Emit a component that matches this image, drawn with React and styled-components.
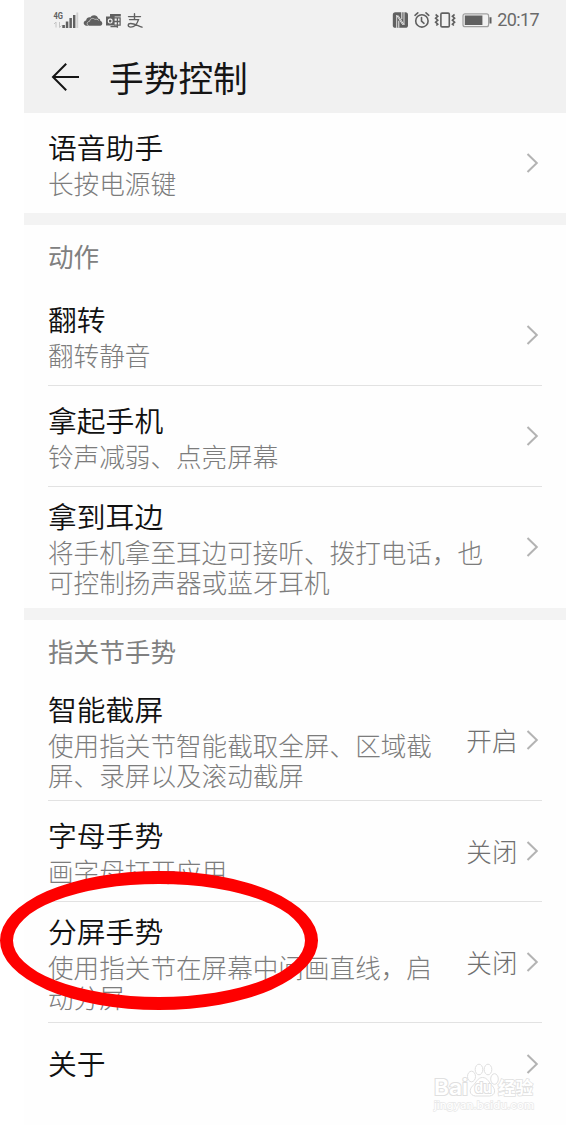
import React from 'react'
import styled, { createGlobalStyle } from 'styled-components';


const GlobalStyle = createGlobalStyle`
    * {
        box-sizing: border-box;
    }
    body {
        margin: 0;
        background: #fff;
        font-family: "Noto Sans CJK SC", "Noto Sans", sans-serif;
        font-weight: 350;
    }
`
const Page = styled.div`
    position: relative;
    width: 566px;
    height: 1125px;
    padding-left: 24px;
    overflow: hidden;
    background: #fff;
`
const Screen = styled.main`
    height: 1125px;
    background: #fefefe;
`
const Header = styled.header`
    height: 113px;
    background: #f1f1f1;
`
const StatusBar = styled.div`
    display: flex;
    justify-content: space-between;
    align-items: center;
    height: 40px;
    padding: 0 27px 0 29px;
    color: #606060;
`
const StatusGroup = styled.div`
    display: flex;
    align-items: center;
    svg {
        display: block;
    }
`
const Clock = styled.span`
    margin-left: 5px;
    font-family: Roboto, sans-serif;
    font-size: 18px;
    font-weight: 400;
    line-height: 20px;
    letter-spacing: -0.6px;
    color: #6a6a6a;
`
const TitleBar = styled.div`
    display: flex;
    align-items: center;
    height: 73px;
    padding: 0 0 0 27px;
    svg {
        display: block;
        margin-right: 29px;
    }
`
const PageTitle = styled.h1`
    margin: 0;
    font-size: 34.7px;
    font-weight: 400;
    line-height: 50px;
    color: #151515;
`
const Section = styled.section`
    border-top: ${props => (props.$first ? '0' : '12px solid #f3f3f3')};
`
const SectionTitle = styled.h2`
    height: 60px;
    margin: 0;
    padding: 10px 24px 0;
    font-size: 25.6px;
    font-weight: 400;
    line-height: 42px;
    color: #808080;
`
const Row = styled.div`
    display: flex;
    align-items: center;
    height: ${props => props.$height}px;
    margin: 0 24px;
    border-bottom: 1px solid ${props => (props.$last ? 'transparent' : '#e2e2e2')};
`
const RowText = styled.div`
    flex: 1;
    min-width: 0;
    padding-bottom: 2px;
`
const RowTitle = styled.div`
    font-size: 28.8px;
    line-height: 42px;
    color: #111;
`
const RowHint = styled.div`
    font-size: 25.6px;
    font-weight: 300;
    line-height: 30px;
    color: #7c7c7c;
`
const RowValue = styled.span`
    margin-left: 24px;
    margin-right: -15.5px;
    font-size: 25.6px;
    font-weight: 300;
    line-height: 42px;
    color: #707070;
`
const Arrow = styled.svg`
    flex: none;
    display: block;
    width: 13px;
    height: 22px;
    margin-left: 24px;
    margin-right: 3px;
`
// red ring drawn over the list
const Ring = styled.div`
    position: absolute;
    left: 0;
    top: 871px;
    width: 318px;
    height: 139px;
    border: 13px solid #fe0000;
    border-radius: 50%;
`
const Watermark = styled.svg`
    position: absolute;
    left: 430px;
    top: 1060px;
    width: 110px;
    height: 55px;
    text {
        paint-order: stroke;
    }
`

const sections = [
    {
        rows: [{ title: '语音助手', hint: '长按电源键', height: 100 }],
    },
    {
        name: '动作',
        rows: [
            { title: '翻转', hint: '翻转静音', height: 101 },
            { title: '拿起手机', hint: '铃声减弱、点亮屏幕', height: 101 },
            { title: '拿到耳边', hint: '将手机拿至耳边可接听、拨打电话，也可控制扬声器或蓝牙耳机', height: 121 },
        ],
    },
    {
        name: '指关节手势',
        rows: [
            { title: '智能截屏', hint: '使用指关节智能截取全屏、区域截屏、录屏以及滚动截屏', value: '开启', height: 121 },
            { title: '字母手势', hint: '画字母打开应用', value: '关闭', height: 101 },
            { title: '分屏手势', hint: '使用指关节在屏幕中间画直线，启动分屏', value: '关闭', height: 121 },
            { title: '关于', height: 83 },
        ],
    },
]

const SignalIcons = () => (
    <svg width="94" height="20" viewBox="0 0 94 20" fill="currentColor">
        <text x="0.5" y="9" fontFamily="Roboto, sans-serif" fontSize="8.5" fontWeight="700" textLength="9.5" lengthAdjust="spacingAndGlyphs">4G</text>
        <g fill="none" stroke="#c4c4c4" strokeWidth="1">
            <path d="M3 17.5V12M1 14l2-2M6.5 12v5.5l2-2" />
        </g>
        <path d="M9.3 15h2.6v3H9.3zM12.8 11.5h2.5V18h-2.5zM16.4 8h2.5v10h-2.5zM20 5h2.4v13H20z" />
        <path d="M23.4 2.5h1.8V18h-1.8z" fill="#cfcfcf" />
        {/* cloud */}
        <path d="M33.5 15.7c-3.6-.2-3.7-4.9-.4-5.2 .3-2.8 2.5-3.5 4.2-3.1 2-3.2 7-2.7 7.8 1.2 1.7.1 2.2 1.3 2.3 2.5 2.6.4 2.5 4.6-.2 4.6z" />
        <path d="M36.2 16c-3-.7-2.5-4.5.4-4.7 .3-2.9 3.6-3.8 5.3-1.8 1.5-.8 3.1-.2 3.6 1.1" fill="none" stroke="#f1f1f1" strokeWidth="0.6" />
        {/* mail */}
        <path d="M57 4h10.8v2.6H57zM53 6.6h8.6v9H53z" />
        <path d="M61 7.8h6.1v7.4H61M61 11.5h6.5M64.4 7.5v10.3M57.5 16.6h7" fill="none" stroke="currentColor" strokeWidth="1.3" />
        <rect x="55.4" y="9.2" width="3.6" height="3.8" rx="1.4" fill="none" stroke="#f1f1f1" strokeWidth="1.2" />
        {/* pay */}
        <g fill="none" stroke="currentColor" strokeWidth="1.4" strokeLinecap="round">
            <path d="M75.5 6.6h12M81.5 3.8v5.5M76.5 9.6h9c-1.3 4-4.3 7.5-7.8 7.5-3.4 0-3.2-3.6 0-3.6 3.4 0 7 2.2 11.3 3.7" />
        </g>
    </svg>
)

const DeviceIcons = () => (
    <svg width="100" height="20" viewBox="0 0 100 20" fill="currentColor">
        {/* nfc */}
        <rect x="0.8" y="2.2" width="15.2" height="15.6" rx="2.6" />
        <path d="M4.7 18V5.2l6 9.6M12 2v12.8L6 5.4" fill="none" stroke="#f1f1f1" strokeWidth="0.9" />
        <path d="M6.8 10.8v7M9.8 2v7.2" fill="none" stroke="#f1f1f1" strokeWidth="1" />
        {/* alarm */}
        <g fill="none" stroke="currentColor" strokeWidth="1.6" strokeLinecap="round">
            <circle cx="29.9" cy="10.9" r="6.2" />
            <path d="M29.5 7.5v3.6l2.5 2.2M23 5.3l2.8-2.5M36.8 5.3L34 2.8" />
        </g>
        {/* vibrate */}
        <g fill="none" stroke="currentColor" strokeWidth="1.6">
            <rect x="48.9" y="3.1" width="8.4" height="13.8" rx="1.2" />
            <path d="M43.6 4.5l2.2 1.7-2.2 2 2.2 2-2.2 2 2.2 2-1.5 1.3M62.6 4.5l-2.2 1.7 2.2 2-2.2 2 2.2 2-2.2 2 1.5 1.3" />
        </g>
        {/* battery */}
        <rect x="71" y="3.9" width="25.6" height="12.8" rx="2" fill="none" stroke="#a0a0a0" strokeWidth="1.2" />
        <path d="M72.8 5.5h17.6v9.6H72.8zM97.5 7.2h2v6.2h-2z" />
    </svg>
)

const ListRow = ({ row, last }) => (
    <Row $height={row.height} $last={last}>
        <RowText>
            <RowTitle>{row.title}</RowTitle>
            {row.hint && <RowHint>{row.hint}</RowHint>}
        </RowText>
        {row.value && <RowValue>{row.value}</RowValue>}
        <Arrow viewBox="0 0 13 22" fill="none" stroke="#b3b3b3" strokeWidth="2">
            <path d="M1.5 2l9.3 9-9.3 9" />
        </Arrow>
    </Row>
)

const App = () => {
    return (
        <Page>
            <GlobalStyle />
            <Screen>
                <Header>
                    <StatusBar>
                        <StatusGroup>
                            <SignalIcons />
                        </StatusGroup>
                        <StatusGroup>
                            <DeviceIcons />
                            <Clock>20:17</Clock>
                        </StatusGroup>
                    </StatusBar>
                    <TitleBar>
                        <svg width="29" height="30" viewBox="0 0 29 30" fill="none" stroke="#151515" strokeWidth="2">
                            <path d="M15.2 1.8L2 15l13.2 13.2M2 15h26" />
                        </svg>
                        <PageTitle>手势控制</PageTitle>
                    </TitleBar>
                </Header>
                {sections.map((section, i) => (
                    <Section key={i} $first={i === 0}>
                        {section.name && <SectionTitle>{section.name}</SectionTitle>}
                        {section.rows.map((row, j) => (
                            <ListRow key={row.title} row={row} last={j === section.rows.length - 1} />
                        ))}
                    </Section>
                ))}
            </Screen>
            <Ring />
            <Watermark viewBox="0 0 110 55" fill="#fff" stroke="#e0e0e0" strokeWidth="1">
                <ellipse cx="41.5" cy="16.5" rx="4" ry="5.3" />
                <ellipse cx="49" cy="9.5" rx="3.8" ry="5.3" />
                <ellipse cx="58" cy="9.5" rx="3.8" ry="5.3" />
                <ellipse cx="64.5" cy="19" rx="3.8" ry="5.3" />
                <path d="M52.5 17.5c5 0 6.5 5 9.5 8 4 4 3.5 10-2.5 10.5h-14c-6-.5-7-6.5-2.5-10.5 3.5-3 4.500-8 9.5-8z" />
                <g fontFamily="Inter, sans-serif" fontWeight="600" strokeWidth="2">
                    <text x="4" y="35" fontSize="22" textLength="34" lengthAdjust="spacingAndGlyphs">Bai</text>
                    <text x="44.5" y="33" fontSize="15" textLength="17" lengthAdjust="spacingAndGlyphs">du</text>
                    <text x="4" y="48.5" fontSize="11" fontWeight="500" stroke="#e8e8e8" strokeWidth="1.3" textLength="100" lengthAdjust="spacingAndGlyphs">jingyan.baidu.com</text>
                </g>
                <text x="68" y="34" fontFamily="Noto Sans CJK SC, sans-serif" fontSize="17.5" fontWeight="700" strokeWidth="1.5">经验</text>
            </Watermark>
        </Page>
    )
}

export default App;
